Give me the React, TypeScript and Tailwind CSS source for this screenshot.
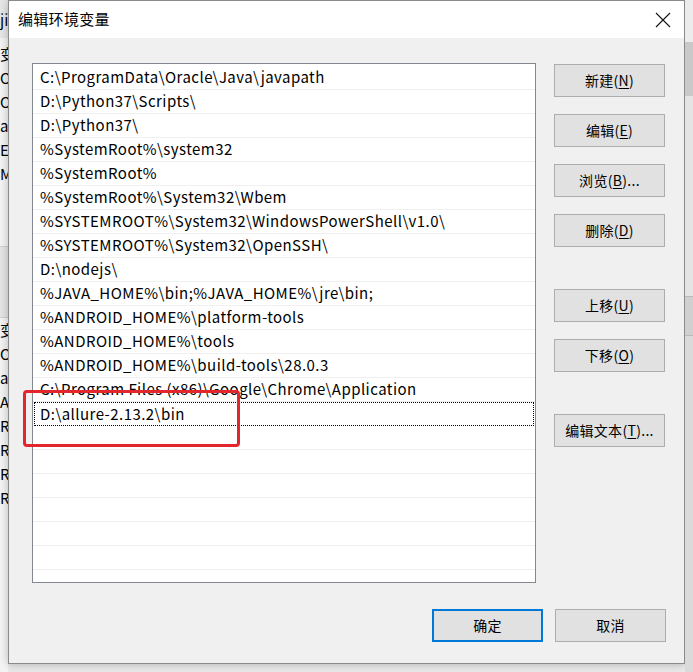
const paths = [
  "C:\\ProgramData\\Oracle\\Java\\javapath",
  "D:\\Python37\\Scripts\\",
  "D:\\Python37\\",
  "%SystemRoot%\\system32",
  "%SystemRoot%",
  "%SystemRoot%\\System32\\Wbem",
  "%SYSTEMROOT%\\System32\\WindowsPowerShell\\v1.0\\",
  "%SYSTEMROOT%\\System32\\OpenSSH\\",
  "D:\\nodejs\\",
  "%JAVA_HOME%\\bin;%JAVA_HOME%\\jre\\bin;",
  "%ANDROID_HOME%\\platform-tools",
  "%ANDROID_HOME%\\tools",
  "%ANDROID_HOME%\\build-tools\\28.0.3",
  "C:\\Program Files (x86)\\Google\\Chrome\\Application",
  "D:\\allure-2.13.2\\bin",
];

const font = { fontFamily: '"Noto Sans CJK SC", "Noto Sans", sans-serif' };

const Btn = ({ label, k, tail = "", primary = false }: { label: string; k?: string; tail?: string; primary?: boolean }) => (
  <button
    className={
      "flex h-[33px] w-[111px] items-center justify-center bg-[#e1e1e1] text-[14px] tracking-[0.3px] text-black " +
      (primary ? "border-2 border-[#0078d7]" : "border border-[#adadad]")
    }
  >
    {label}
    {k && (
      <>
        (<span className="underline underline-offset-2">{k}</span>){tail}
      </>
    )}
  </button>
);

const bgLeft = ["变", "Or", "Or", "a", "E", "M"];
const bgLeft2 = ["变", "OS", "a", "A", "R", "R", "R", "R"];

export default function App() {
  const rows = Array.from({ length: 21 }, (_, i) => paths[i] ?? "");

  return (
    <div className="relative flex h-[672px] w-[693px] overflow-hidden bg-[#e8e8e8]" style={font}>
      {/* window behind, left */}
      <div className="flex w-[8px] shrink-0 flex-col overflow-hidden bg-[#f3f3f3] text-[15px] leading-[24px] text-black">
        <div className="h-[38px] bg-[#e6e6e6] pt-[8px]">ji</div>
        <div className="flex flex-col pt-[4px]">
          {bgLeft.map((t, i) => (
            <div key={i} className="h-[24px]">{t}</div>
          ))}
        </div>
        <div className="mt-[60px] h-[72px] border-y border-[#cfcfcf] bg-[#e4e4e4]" />
        <div className="flex flex-col">
          {bgLeft2.map((t, i) => (
            <div key={i} className="h-[24px]">{t}</div>
          ))}
        </div>
      </div>

      {/* dialog */}
      <div className="flex h-[664px] w-[677px] shrink-0 flex-col border border-[#8a8a8a] bg-[#f0f0f0] shadow-[0_0_8px_rgba(0,0,0,0.25)]">
        <div className="flex h-[37px] shrink-0 items-center justify-between bg-white pl-[9px] pr-[13px]">
          <span className="text-[15px] tracking-[0.3px] text-black">编辑环境变量</span>
          <svg width="16" height="16" viewBox="0 0 16 16">
            <path d="M1 1 L15 15 M15 1 L1 15" stroke="#111" strokeWidth="1.1" fill="none" />
          </svg>
        </div>

        <div className="flex pl-[23px] pt-[25px]">
          <div className="h-[520px] w-[504px] overflow-hidden border border-[#828790] bg-white pt-[2px]">
            {rows.map((p, i) => (
              <div
                key={i}
                className={
                  "flex h-[24px] items-center whitespace-nowrap text-[15px] tracking-[0.45px] text-black " +
                  (i === 14
                    ? "mx-[1px] border border-dotted border-black pl-[5px]"
                    : "border-b border-[#f0f0f0] pl-[7px]")
                }
              >
                {p}
              </div>
            ))}
          </div>

          <div className="ml-[18px] flex flex-col pt-[1px]">
            <div className="flex flex-col gap-[17px]">
              <Btn label="新建" k="N" />
              <Btn label="编辑" k="E" />
              <Btn label="浏览" k="B" tail="..." />
              <Btn label="删除" k="D" />
            </div>
            <div className="mt-[42px] flex flex-col gap-[17px]">
              <Btn label="上移" k="U" />
              <Btn label="下移" k="O" />
            </div>
            <div className="mt-[42px]">
              <Btn label="编辑文本" k="T" tail="..." />
            </div>
          </div>
        </div>

        <div className="flex justify-end gap-[12px] pr-[18px] pt-[26px]">
          <Btn label="确定" primary />
          <Btn label="取消" />
        </div>
      </div>

      {/* window behind, right */}
      <div className="flex flex-1 flex-col bg-[#dadada]">
        <div className="h-[42px] bg-[#ececec]" />
        <div className="h-[54px] bg-[#c9c9c9]" />
        <div className="h-[200px] bg-[#e4e4e4]" />
        <div className="h-[40px] border-y border-[#bbb] bg-[#d0d0d0]" />
      </div>

      {/* red annotation */}
      <div className="absolute left-[23px] top-[390px] h-[57px] w-[217px] rounded-[4px] border-[3px] border-[#e3262b]" />
    </div>
  );
}
